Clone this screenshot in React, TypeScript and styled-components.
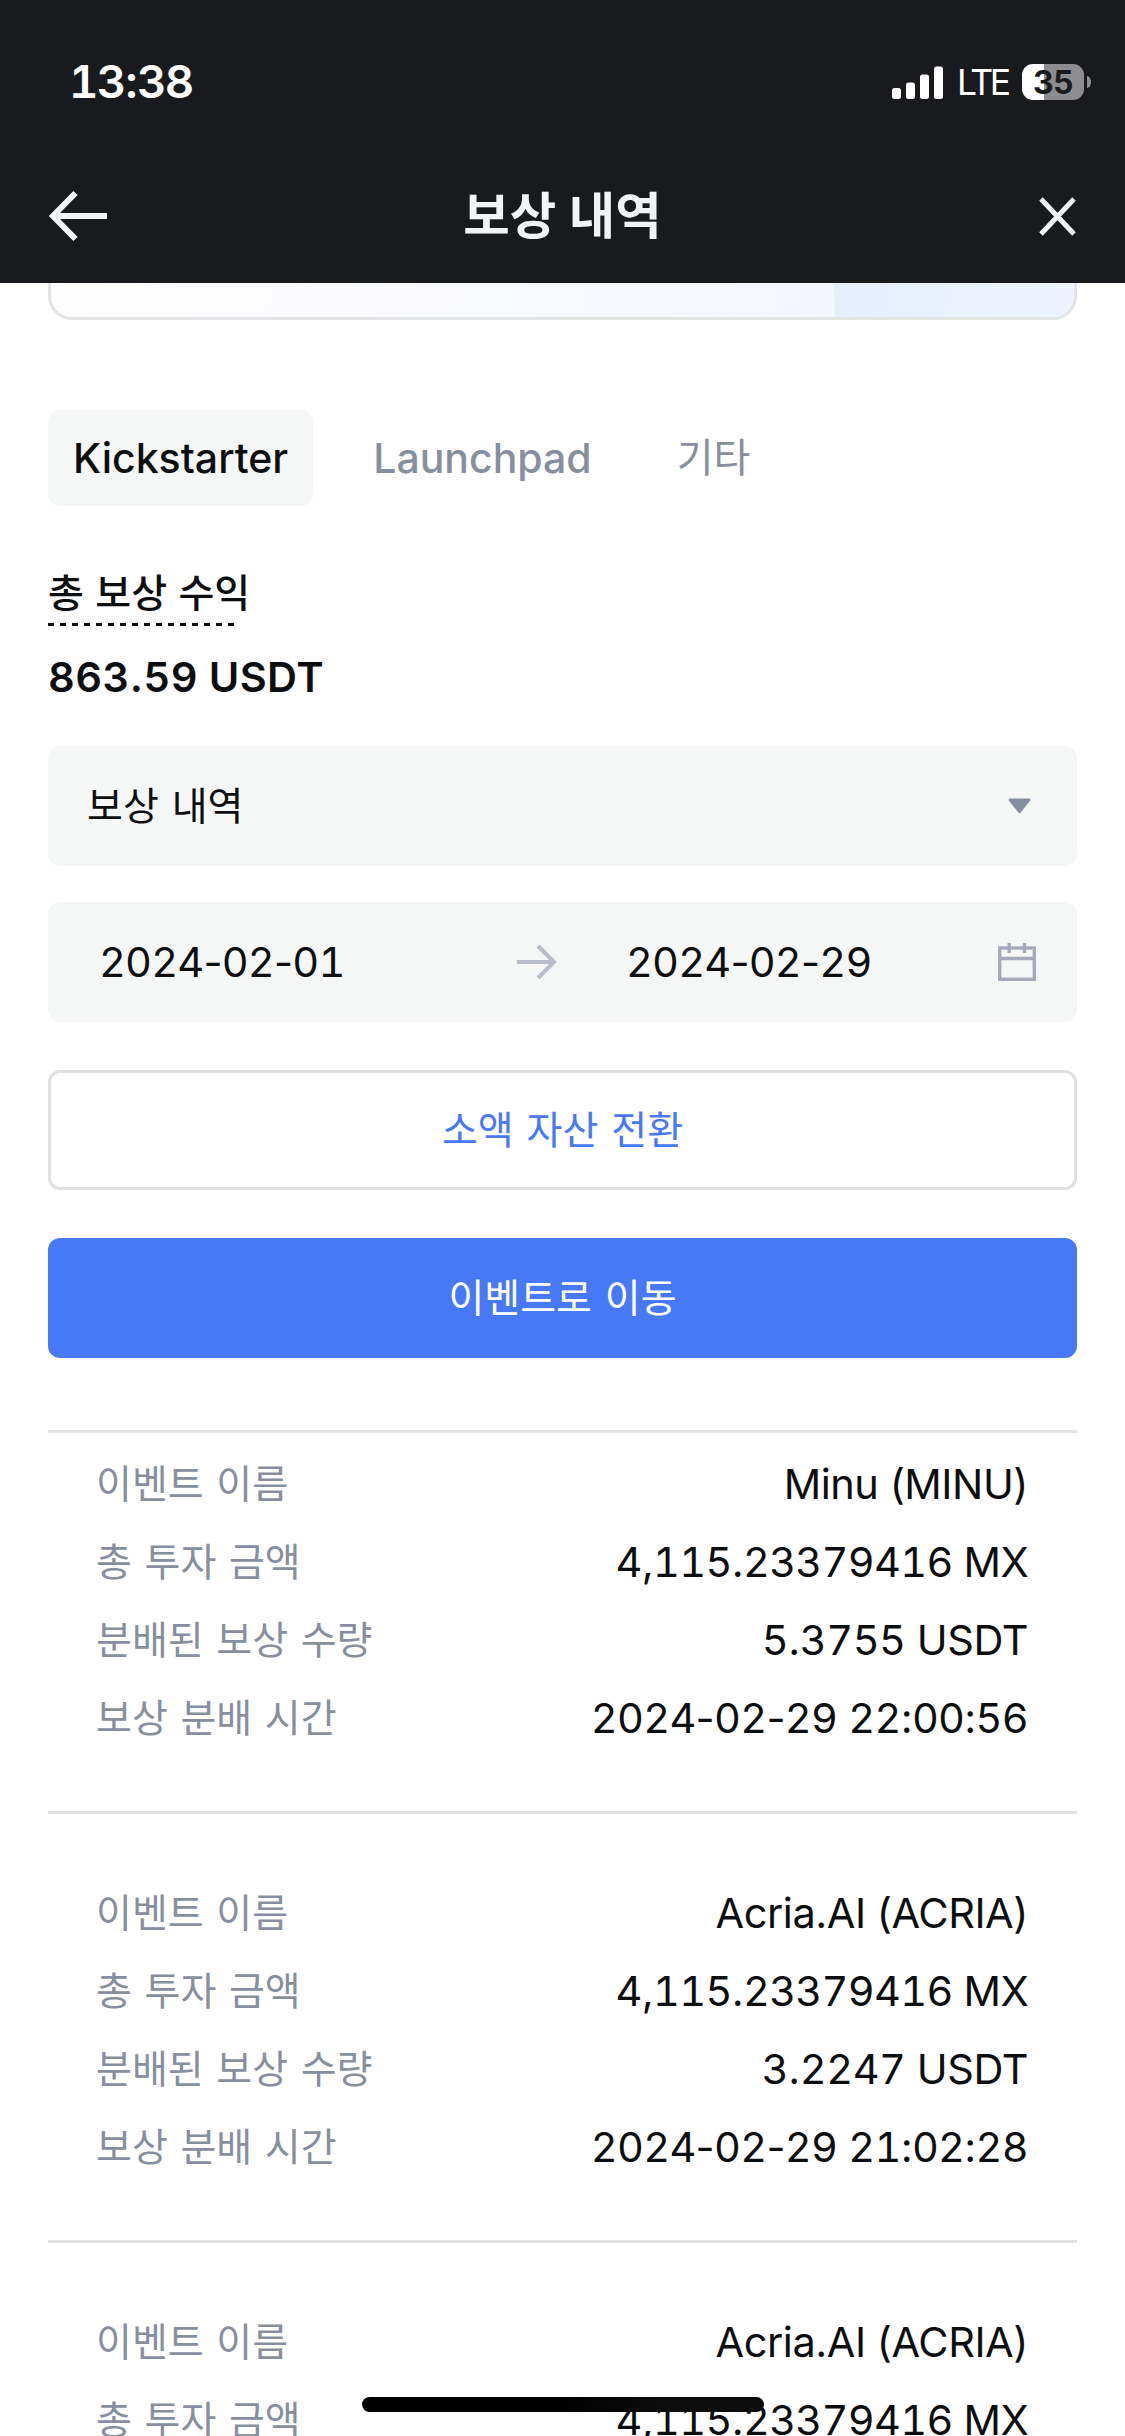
import React from "react";
import styled, { createGlobalStyle } from "styled-components";

const GlobalStyle = createGlobalStyle`
  * { box-sizing: border-box; }
  html, body { margin: 0; padding: 0; background: #ffffff; }
  body {
    font-family: Inter, "Noto Sans CJK KR", sans-serif;
    color: #0d0e10;
  }
`;

const Screen = styled.div`
  position: relative;
  width: 1125px;
  height: 2436px;
  overflow: hidden;
  background: #ffffff;
  display: flex;
  flex-direction: column;
`;

const Header = styled.header`
  flex: none;
  height: 283px;
  background: #191a1d;
`;

const StatusBar = styled.div`
  height: 150px;
  padding: 14px 34px 0 69px;
  display: flex;
  align-items: center;
  justify-content: space-between;
  color: #ffffff;
`;

const Clock = styled.span`
  font-size: 45.5px;
  line-height: 56px;
  font-weight: 600;
  letter-spacing: -1.8px;
`;

const StatusIcons = styled.div`
  display: flex;
  align-items: center;
`;

const Network = styled.span`
  margin-left: 13px;
  width: 65px;
  font-size: 35.5px;
  line-height: 44px;
  letter-spacing: -3.4px;
  padding-top: 2px;
`;

const Battery = styled.div`
  width: 62px;
  height: 36px;
  padding-top: 2px;
  border-radius: 11px;
  display: flex;
  align-items: center;
  justify-content: center;
  background: linear-gradient(90deg, #ffffff 22px, #8d8d8f 22px);
  color: #191a1d;
  font-size: 32px;
  line-height: 34px;
  font-weight: 700;
  letter-spacing: -0.6px;
`;

const BatteryTip = styled.span`
  margin-left: 3px;
  width: 4px;
  height: 12px;
  border-radius: 0 4px 4px 0 / 0 6px 6px 0;
  background: #8d8d8f;
`;

const TitleBar = styled.div`
  height: 131px;
  padding: 0 47px;
  display: grid;
  grid-template-columns: 62px 1fr 62px;
  align-items: center;
  color: #f2f3f5;
`;

const Title = styled.h1`
  margin: 0;
  text-align: center;
  font-size: 50.5px;
  line-height: 64px;
  font-weight: 600;
`;

const IconButton = styled.button<{ $end?: boolean }>`
  border: 0;
  padding: 0;
  background: none;
  color: inherit;
  display: flex;
  justify-content: ${(p) => (p.$end ? "flex-end" : "flex-start")};
`;

const Content = styled.main`
  flex: none;
  padding: 0 48px;
  display: flex;
  flex-direction: column;
`;

const Banner = styled.div`
  height: 37px;
  overflow: hidden;
  border: 3px solid #e2e4e5;
  border-top: 0;
  border-radius: 0 0 24px 24px;
  background: linear-gradient(100deg, #fefefe 0%, #f8f9fe 50%, #f0f5ff 100%);
  display: flex;
  justify-content: flex-end;
`;

const BannerAccent = styled.div`
  width: 240px;
  height: 34px;
  border-radius: 0 0 0 2px / 0 0 0 34px;
  background: linear-gradient(100deg, #e6edfd, #eef3ff);
`;

const Tabs = styled.nav`
  margin-top: 90px;
  height: 96px;
  display: flex;
`;

const Tab = styled.button<{ $active?: boolean; $regular?: boolean }>`
  border: 0;
  height: 96px;
  margin-right: 35px;
  padding: 0 25px;
  border-radius: 12px;
  font: inherit;
  font-size: ${(p) => (p.$regular ? "40px" : "41px")};
  line-height: 50px;
  font-weight: ${(p) => (p.$regular ? 400 : 500)};
  color: ${(p) => (p.$active ? "#0d0e10" : "#878f9f")};
  background: ${(p) => (p.$active ? "#f5f7f7" : "transparent")};
`;

const Summary = styled.section`
  margin-top: 60px;
  display: flex;
  flex-direction: column;
  align-items: flex-start;
`;

const SummaryLabel = styled.div`
  height: 57px;
  font-size: 39px;
  line-height: 54px;
  font-weight: 500;
  word-spacing: 1px;
`;

const Dashes = styled.div`
  width: 187px;
  height: 3px;
  background: repeating-linear-gradient(90deg, #0d0e10 0 6px, transparent 6px 12px);
`;

const SummaryValue = styled.div`
  margin-top: 26px;
  height: 94px;
  font-size: 41.5px;
  line-height: 50px;
  font-weight: 600;
  letter-spacing: 0.4px;
`;

const Field = styled.div`
  height: 120px;
  border-radius: 12px;
  background: #f5f7f7;
  display: flex;
  align-items: center;
  font-size: 41.5px;
  margin-bottom: 36px;
`;

const SelectField = styled(Field)`
  padding: 0 46px 0 39px;
  justify-content: space-between;
`;

const SelectText = styled.span`
  padding-bottom: 7px;
  font-size: 39px;
  word-spacing: 2px;
`;

const DateField = styled(Field)`
  padding: 0 41px 0 51px;
  margin-bottom: 48px;
  display: grid;
  grid-template-columns: 418px 109px 1fr 38px;
  letter-spacing: -0.8px;
`;

const ActionButton = styled.button<{ $primary?: boolean }>`
  height: 120px;
  margin: 0 0 48px;
  padding: 0 0 7px;
  border-radius: 12px;
  border: 3px solid ${(p) => (p.$primary ? "#4779f7" : "#dfe0e0")};
  background: ${(p) => (p.$primary ? "#4779f7" : "#ffffff")};
  color: ${(p) => (p.$primary ? "#ffffff" : "#4779f7")};
  font: inherit;
  font-size: 39px;
  word-spacing: 2px;
`;

const List = styled.ul`
  list-style: none;
  margin: 24px 0 0;
  padding: 0;
`;

const Item = styled.li<{ $first?: boolean }>`
  border-top: 3px solid ${(p) => (p.$first ? "#e2e4e5" : "#dfe0e0")};
  padding: ${(p) => (p.$first ? "12px" : "60px")} 48px 54px;
`;

const Row = styled.div`
  height: 78px;
  display: flex;
  align-items: center;
  justify-content: space-between;
`;

const Label = styled.span`
  font-size: 39px;
  line-height: 60px;
  word-spacing: 1.7px;
  color: #878f9f;
`;

const Value = styled.span<{ $tight?: boolean }>`
  padding-right: 1px;
  font-size: 41.5px;
  line-height: 60px;
  letter-spacing: ${(p) => (p.$tight ? "-0.7px" : "-0.45px")};
`;

const Digits = styled.span`
  font-variant-numeric: tabular-nums;
`;

const HomeIndicator = styled.div`
  position: absolute;
  left: 362px;
  top: 2397px;
  width: 402px;
  height: 15px;
  border-radius: 8px;
  background: linear-gradient(90deg, #000000 50%, #0d0d0d 75%);
`;

const records = [
  { name: "Minu (MINU)", invested: "4,115.23379416 MX", reward: "5.3755 USDT", time: "2024-02-29 22:00:56" },
  { name: "Acria.AI (ACRIA)", invested: "4,115.23379416 MX", reward: "3.2247 USDT", time: "2024-02-29 21:02:28" },
  { name: "Acria.AI (ACRIA)", invested: "4,115.23379416 MX" },
];

// Equal-width digits, with punctuation and letters left proportional.
const Figures = ({ text }: { text: string }) => (
  <span>
    {text.split(/(\d+)/).map((part, i) => (i % 2 ? <Digits key={i}>{part}</Digits> : part))}
  </span>
);

const SignalIcon = () => (
  <svg width="52" height="33" viewBox="0 0 52 33" fill="currentColor">
    <rect x="0" y="22" width="9" height="11" rx="2.5" />
    <rect x="14" y="16.500" width="9" height="16.500" rx="2.5" />
    <rect x="28" y="8.500" width="9" height="24.500" rx="2.5" />
    <rect x="42" y="0.500" width="9" height="32.500" rx="2.5" />
  </svg>
);

const BackIcon = () => (
  <svg width="62" height="54" viewBox="0 0 62 54" fill="none" stroke="currentColor" strokeWidth="6">
    <path d="M60 27H7M28.500 4L6 27L28.500 50" />
  </svg>
);

const CloseIcon = () => (
  <svg width="40" height="40" viewBox="0 0 40 40" fill="none" stroke="currentColor" strokeWidth="5">
    <path d="M3 3L36 38M36 3L3 38" />
  </svg>
);

const CaretIcon = () => (
  <svg width="23" height="16" viewBox="0 0 23 16" fill="#878f9f">
    <path d="M2 0.500H21Q23 0.500 22.200 2.500L12.700 14.500Q11.500 16 10.300 14.500L0.800 2.500Q0 0.500 2 0.500Z" />
  </svg>
);

const ArrowIcon = () => (
  <svg width="42" height="38" viewBox="0 0 42 38" fill="none" stroke="#b9bdca" strokeWidth="4">
    <path d="M0 19H37M21 3L37 19L21 35" />
  </svg>
);

const CalendarIcon = () => (
  <svg width="38" height="38" viewBox="0 0 38 38" fill="none" stroke="#a5aab9" strokeWidth="3.4">
    <rect x="1.700" y="5" width="34.600" height="31.300" />
    <path d="M1.700 15.500H36.300M11.200 0V10M26.500 0V10" />
  </svg>
);

const App: React.FC = () => (
  <>
    <GlobalStyle />
    <Screen>
      <Header>
        <StatusBar>
          <Clock><Figures text="13:38" /></Clock>
          <StatusIcons>
            <SignalIcon />
            <Network>LTE</Network>
            <Battery>35</Battery>
            <BatteryTip />
          </StatusIcons>
        </StatusBar>
        <TitleBar>
          <IconButton aria-label="뒤로"><BackIcon /></IconButton>
          <Title>보상 내역</Title>
          <IconButton $end aria-label="닫기"><CloseIcon /></IconButton>
        </TitleBar>
      </Header>
      <Content>
        <Banner><BannerAccent /></Banner>
        <Tabs>
          <Tab $active>Kickstarter</Tab>
          <Tab>Launchpad</Tab>
          <Tab $regular>기타</Tab>
        </Tabs>
        <Summary>
          <SummaryLabel>총 보상 수익</SummaryLabel>
          <Dashes />
          <SummaryValue><Figures text="863.59 USDT" /></SummaryValue>
        </Summary>
        <SelectField>
          <SelectText>보상 내역</SelectText>
          <CaretIcon />
        </SelectField>
        <DateField>
          <Figures text="2024-02-01" />
          <ArrowIcon />
          <Figures text="2024-02-29" />
          <CalendarIcon />
        </DateField>
        <ActionButton>소액 자산 전환</ActionButton>
        <ActionButton $primary>이벤트로 이동</ActionButton>
        <List>
          {records.map((r, i) => (
            <Item key={i} $first={i === 0}>
              <Row><Label>이벤트 이름</Label><Value>{r.name}</Value></Row>
              <Row><Label>총 투자 금액</Label><Value $tight><Figures text={r.invested} /></Value></Row>
              {r.reward && <Row><Label>분배된 보상 수량</Label><Value><Figures text={r.reward} /></Value></Row>}
              {r.time && <Row><Label>보상 분배 시간</Label><Value $tight><Figures text={r.time} /></Value></Row>}
            </Item>
          ))}
        </List>
      </Content>
      <HomeIndicator />
    </Screen>
  </>
);

export default App;
